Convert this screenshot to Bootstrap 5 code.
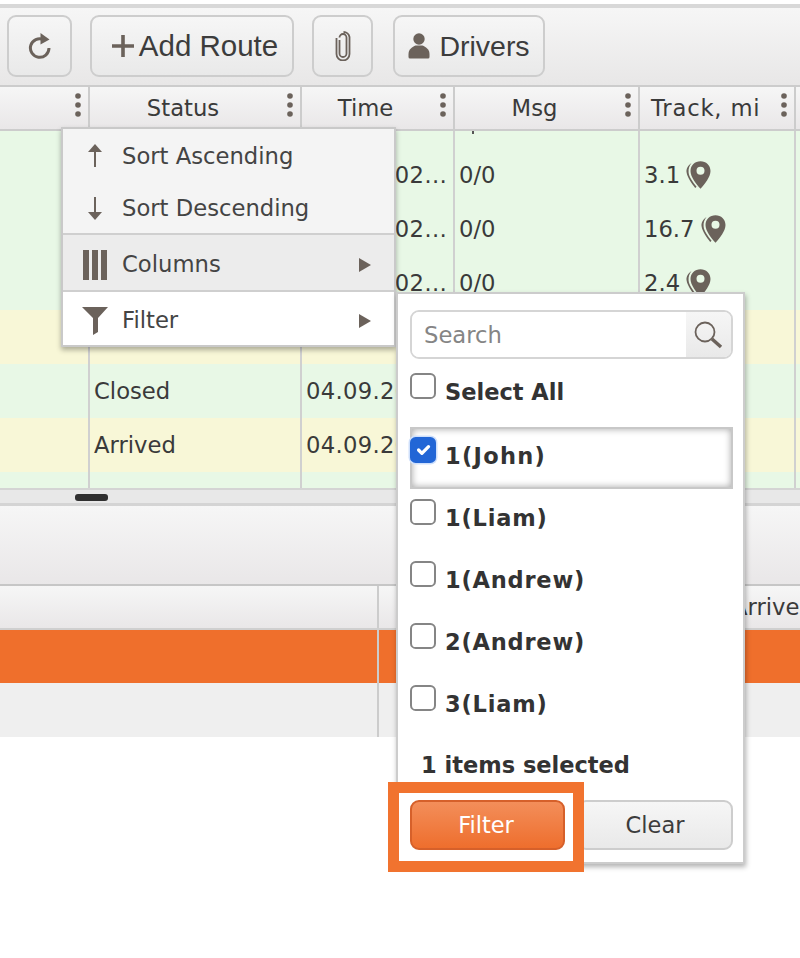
<!DOCTYPE html>
<html lang="en">
<head>
<meta charset="utf-8">
<title>Routes</title>
<link href="https://cdn.jsdelivr.net/npm/bootstrap@5.3.0/dist/css/bootstrap.min.css" rel="stylesheet">
<style>
body{margin:0;background:#fff;font-family:"DejaVu Sans",sans-serif;font-size:22.7px;color:#3a3a3a;overflow:hidden}
.rk-app{position:relative;width:800px;height:958px;overflow:hidden;padding-top:4px}
.rk-topline{height:4px;background:#d8d8d8}
.rk-toolbar{height:77px;padding:7px 0 0 7px;background:linear-gradient(#f6f6f6,#e8e7e7);gap:18px}
.rk-tb{height:62px;border:2px solid #cdcdcd;border-radius:9px;background:linear-gradient(#f6f6f6,#e9e9e9);font-family:"Liberation Sans",sans-serif;font-size:29.5px;color:#3c3c3c;padding:0;display:flex;align-items:center;justify-content:center;gap:5px}
.rk-tb:hover{border-color:#cdcdcd}
.rk-w65{width:65px}.rk-w205{width:204px;padding-left:6px}.rk-w62{width:61px;margin-right:2px}.rk-w153{width:152px}
.rk-drivers{font-size:28.5px;gap:9px;padding-right:0}
.rk-head{height:46px;border-top:2px solid #ccc;border-bottom:2px solid #ccc;background:linear-gradient(#f6f6f6,#e9e7e8)}
.rk-hc{position:relative;height:100%;border-right:2px solid #ccc;text-align:center;line-height:42px;flex:none;white-space:nowrap;overflow:hidden;padding-right:24px}
.rk-hc svg{position:absolute;right:6px;top:5px}
.rk-c0{width:90px}.rk-c1{width:212px}.rk-c2{width:153px}.rk-c3{width:185px}.rk-c4{width:156px}.rk-c5{flex:1;border-right:0}
.rk-head .rk-track{text-align:left;padding-left:11px;padding-right:0;letter-spacing:.8px}
.rk-grid{height:357px;overflow:hidden}
.rk-part{height:16.5px}
.rk-tick{width:2px;height:3px;background:#555;margin-left:13px}
.rk-row{height:54px}
.rk-green{background:#e8f8e6}.rk-yellow{background:#f8f7d7}
.rk-cell{height:100%;border-right:2px solid #d0d0d0;flex:none;padding:0 4px;line-height:54px;white-space:nowrap;overflow:hidden;text-overflow:ellipsis}
.rk-time{letter-spacing:.3px;padding-right:6px}
.rk-upper{line-height:55px}
.rk-pin{margin-left:6px;vertical-align:-6px}
.rk-scroll{height:15px;border-top:2px solid #d4d4d4;background:#e8e8e8;padding:4px 0 0 75px}
.rk-thumb{width:33px;height:7px;background:#303030;border-radius:3px}
.rk-strip{height:3px;background:#d4d4d4}
.rk-lowbar{height:78px;background:linear-gradient(#f6f6f6,#e9e7e8)}
.rk-lowhead{height:46px;border-top:2px solid #c6c6c6;border-bottom:2px solid #cfcfcf;background:linear-gradient(#f6f6f6,#e9e7e8)}
.rk-lc{height:100%;flex:none;border-right:2px solid #ccc}
.rk-l0{width:379px}.rk-l1{width:347px}.rk-l2{flex:1;border-right:0;padding-left:6px;line-height:42px;white-space:nowrap;overflow:hidden}
.rk-orange{height:53px;background:#ef6f2c}
.rk-gray{height:54px;background:#efefef}
.rk-menu{position:absolute;left:61px;top:127px;width:335px;height:220px;border:2px solid #c9c9c9;box-shadow:0 3px 5px rgba(0,0,0,.3);background:#f4f4f4;z-index:5;border-radius:0}
.rk-mi{display:flex;align-items:center;border:0;border-radius:0;background:transparent;padding:1px 0 0;color:#444;height:52px}
.rk-mi-ico{width:59px;display:flex;justify-content:center;padding-left:5px;flex:none;box-sizing:border-box}
.rk-mi-txt{flex:1}
.rk-tri{margin-right:22px}
.rk-menu .rk-mi-col{height:59px;background:#ececec;border-top:2px solid #cfcfcf;border-bottom:2px solid #cfcfcf;padding-top:4px}
.rk-menu .rk-mi-fil{height:53px;background:#fff;padding-top:4px}
.rk-mi-first{height:53px}
.rk-mi-sec{height:51px}
.rk-sub{position:absolute;left:396px;top:292px;width:349px;height:572px;background:#fff;border:2px solid #ccc;box-shadow:1px 3px 5px rgba(0,0,0,.3);padding:16px 10px 0 12px;z-index:6}
.rk-search{height:49px;border:2px solid #d5d5d5;border-radius:9px;overflow:hidden;flex-wrap:nowrap}
.rk-sinput{border:0;border-radius:0;font-size:22.7px;font-family:"DejaVu Sans",sans-serif;padding:0 0 0 12px;height:45px;box-shadow:none}
.rk-sinput::placeholder{color:#858585}
.rk-sbtn{width:46px;flex:none;background:linear-gradient(#f6f6f6,#e9e9e9);display:flex;align-items:center;justify-content:center}
.rk-item{display:flex;gap:9px;height:62px;padding-top:10px;font-weight:700;color:#333;align-items:flex-start;font-size:22.5px}
.rk-name{letter-spacing:.8px}
.rk-john{letter-spacing:1.3px}
.rk-item-first{height:64px}
.rk-item-sel{border:2px solid #c8c8c8;box-shadow:inset 0 0 7px rgba(0,0,0,.35);padding-top:8px}
.rk-item-sel .rk-check{margin-left:-2px}
.rk-check{width:26px;height:26px;margin:0;flex:none;border:2px solid #858585;border-radius:5px}
.rk-check:checked{background-color:#2266d6;border-color:#2266d6;box-shadow:0 0 0 1.5px #cfe0fb}
.rk-itxt{line-height:26px;margin-top:6px}
.rk-count{font-weight:700;color:#333;line-height:26px;margin:15px 0 22px 11px;font-size:22.5px}
.rk-btns{gap:12px}
.rk-fbtn,.rk-cbtn{height:50px;border-radius:9px;font-size:22.5px;font-family:"DejaVu Sans",sans-serif;padding:0;line-height:1}
.rk-fbtn{width:155px;flex:none;color:#fff;border:2px solid #d6602a;background:linear-gradient(#f38e5a,#ee6e2d);padding-right:3px}
.rk-cbtn{flex:1;color:#3c3c3c;border:2px solid #cdcdcd;background:linear-gradient(#f6f6f6,#e9e9e9)}
.rk-hilite{position:absolute;left:388px;top:782px;width:196px;height:90px;border:11px solid #f1732f;z-index:7;pointer-events:none}
</style>
</head>
<body>
<svg width="0" height="0" class="position-absolute">
  <defs>
    <symbol id="rk-dots" viewBox="0 0 8 32"><circle cx="4" cy="4" r="2.8" fill="#6b625b"/><circle cx="4" cy="13" r="2.8" fill="#6b625b"/><circle cx="4" cy="22" r="2.8" fill="#6b625b"/></symbol>
    <symbol id="rk-pinicon" viewBox="0 0 25 28">
      <path d="M5.500 2C2 4.500 0 7.500.6 11.500c.8 5 4.800 10.500 8.600 15.500l1.400-1.300C6.800 21 3 16 2.600 11.500 2.200 7.800 3.500 4.500 5.500 2z" fill="#6b625b"/>
      <path fill-rule="evenodd" d="M14.500.3c5.600 0 10 4.200 10 9.600 0 6-5.900 13.300-10 17.800C10.400 23.200 4.500 15.900 4.500 9.900 4.500 4.500 8.900.3 14.500.3zm0 5.400a4 4 0 1 0 0 8 4 4 0 0 0 0-8z" fill="#6b625b"/>
    </symbol>
    <symbol id="rk-tricon" viewBox="0 0 14 16"><path d="M1 1l12 7-12 7z" fill="#6b625b"/></symbol>
  </defs>
</svg>

<div class="rk-app">
  <div class="rk-topline"></div>
  <div class="rk-toolbar d-flex align-items-start">
    <button type="button" class="btn rk-tb rk-w65" aria-label="Reload">
      <svg width="24" height="26" viewBox="0 0 24 26"><path d="M15.500 6.500A9.300 9.300 0 1 0 21 15" fill="none" stroke="#6b625b" stroke-width="3"/><path d="M12.500 0l9 6.500-9 5z" fill="#6b625b"/></svg>
    </button>
    <button type="button" class="btn rk-tb rk-w205">
      <svg width="22" height="22" viewBox="0 0 22 22"><path d="M0 9.200h22v3.600H0zM9.200 0h3.600v22H9.200z" fill="#6b625b"/></svg><span>Add Route</span>
    </button>
    <button type="button" class="btn rk-tb rk-w62" aria-label="Attach">
      <svg width="16" height="30" viewBox="0 0 16 30"><path d="M4.500 9v13.500a3.500 3.500 0 0 0 7 0V6.500a3 3 0 0 0-7 0M1.500 7v16a6.500 6.500 0 0 0 13 0V6a6 6 0 0 0-6-5" fill="none" stroke="#6b625b" stroke-width="1.800"/></svg>
    </button>
    <button type="button" class="btn rk-tb rk-drivers rk-w153">
      <svg width="22" height="26" viewBox="0 0 22 26"><circle cx="11" cy="6" r="5.700" fill="#6b625b"/><path d="M7.500 12.500h7c3 1.500 7 3.500 7 8.500v3a1.500 1.500 0 0 1-1.500 1.500H2A1.500 1.500 0 0 1 .5 24v-3c0-5 4-7 7-8.500z" fill="#6b625b"/></svg><span>Drivers</span>
    </button>
  </div>

  <div class="rk-head d-flex">
    <div class="rk-hc rk-c0"><svg width="8" height="32"><use href="#rk-dots"/></svg></div>
    <div class="rk-hc rk-c1">Status<svg width="8" height="32"><use href="#rk-dots"/></svg></div>
    <div class="rk-hc rk-c2">Time<svg width="8" height="32"><use href="#rk-dots"/></svg></div>
    <div class="rk-hc rk-c3">Msg<svg width="8" height="32"><use href="#rk-dots"/></svg></div>
    <div class="rk-hc rk-c4 rk-track">Track, mi<svg width="8" height="32"><use href="#rk-dots"/></svg></div>
    <div class="rk-hc rk-c5"></div>
  </div>

  <div class="rk-grid">
    <div class="rk-part rk-green d-flex"><div class="rk-cell rk-c0"></div><div class="rk-cell rk-c1"></div><div class="rk-cell rk-c2"></div><div class="rk-cell rk-c3"><div class="rk-tick"></div></div><div class="rk-cell rk-c4"></div><div class="rk-cell rk-c5"></div></div>
    <div class="rk-row rk-green d-flex"><div class="rk-cell rk-c0"></div><div class="rk-cell rk-c1"></div><div class="rk-cell rk-c2 rk-time rk-upper">04.09.2021 10:02</div><div class="rk-cell rk-c3 rk-upper">0/0</div><div class="rk-cell rk-c4 rk-upper">3.1<svg class="rk-pin" width="25" height="28"><use href="#rk-pinicon"/></svg></div><div class="rk-cell rk-c5"></div></div>
    <div class="rk-row rk-green d-flex"><div class="rk-cell rk-c0"></div><div class="rk-cell rk-c1"></div><div class="rk-cell rk-c2 rk-time rk-upper">04.09.2021 10:15</div><div class="rk-cell rk-c3 rk-upper">0/0</div><div class="rk-cell rk-c4 rk-upper">16.7<svg class="rk-pin" width="25" height="28"><use href="#rk-pinicon"/></svg></div><div class="rk-cell rk-c5"></div></div>
    <div class="rk-row rk-green d-flex"><div class="rk-cell rk-c0"></div><div class="rk-cell rk-c1"></div><div class="rk-cell rk-c2 rk-time rk-upper">04.09.2021 10:30</div><div class="rk-cell rk-c3 rk-upper">0/0</div><div class="rk-cell rk-c4 rk-upper">2.4<svg class="rk-pin" width="25" height="28"><use href="#rk-pinicon"/></svg></div><div class="rk-cell rk-c5"></div></div>
    <div class="rk-row rk-yellow d-flex"><div class="rk-cell rk-c0"></div><div class="rk-cell rk-c1"></div><div class="rk-cell rk-c2"></div><div class="rk-cell rk-c3"></div><div class="rk-cell rk-c4"></div><div class="rk-cell rk-c5"></div></div>
    <div class="rk-row rk-green d-flex"><div class="rk-cell rk-c0"></div><div class="rk-cell rk-c1">Closed</div><div class="rk-cell rk-c2 rk-time">04.09.2021 10:48</div><div class="rk-cell rk-c3"></div><div class="rk-cell rk-c4"></div><div class="rk-cell rk-c5"></div></div>
    <div class="rk-row rk-yellow d-flex"><div class="rk-cell rk-c0"></div><div class="rk-cell rk-c1">Arrived</div><div class="rk-cell rk-c2 rk-time">04.09.2021 11:05</div><div class="rk-cell rk-c3"></div><div class="rk-cell rk-c4"></div><div class="rk-cell rk-c5"></div></div>
    <div class="rk-row rk-green d-flex"><div class="rk-cell rk-c0"></div><div class="rk-cell rk-c1"></div><div class="rk-cell rk-c2"></div><div class="rk-cell rk-c3"></div><div class="rk-cell rk-c4"></div><div class="rk-cell rk-c5"></div></div>
  </div>

  <div class="rk-scroll"><div class="rk-thumb"></div></div>
  <div class="rk-strip"></div>
  <div class="rk-lowbar"></div>
  <div class="rk-lowhead d-flex"><div class="rk-lc rk-l0"></div><div class="rk-lc rk-l1"></div><div class="rk-lc rk-l2">Arrived</div></div>
  <div class="rk-orange d-flex"><div class="rk-lc rk-l0"></div><div class="rk-lc rk-l1"></div></div>
  <div class="rk-gray d-flex"><div class="rk-lc rk-l0"></div><div class="rk-lc rk-l1"></div></div>

  <div class="rk-menu list-group">
    <div class="list-group-item rk-mi rk-mi-first"><span class="rk-mi-ico"><svg width="16" height="24" viewBox="0 0 16 24"><path d="M8 0l7 8H9v15H7V8H1z" fill="#6b625b"/></svg></span><span class="rk-mi-txt">Sort Ascending</span></div>
    <div class="list-group-item rk-mi rk-mi-sec"><span class="rk-mi-ico"><svg width="16" height="24" viewBox="0 0 16 24"><path d="M8 24l7-8H9V1H7v15H1z" fill="#6b625b"/></svg></span><span class="rk-mi-txt">Sort Descending</span></div>
    <div class="list-group-item rk-mi rk-mi-col"><span class="rk-mi-ico"><svg width="24" height="30" viewBox="0 0 24 30"><path d="M0 0h6v30H0zM9 0h6v30H9zM18 0h6v30h-6z" fill="#6b625b"/></svg></span><span class="rk-mi-txt">Columns</span><svg class="rk-tri" width="14" height="16"><use href="#rk-tricon"/></svg></div>
    <div class="list-group-item rk-mi rk-mi-fil"><span class="rk-mi-ico"><svg width="26" height="28" viewBox="0 0 26 28"><path d="M0 0h26L16 11v14l-5 3V11z" fill="#6b625b"/></svg></span><span class="rk-mi-txt">Filter</span><svg class="rk-tri" width="14" height="16"><use href="#rk-tricon"/></svg></div>
  </div>

  <div class="rk-sub">
    <div class="input-group rk-search">
      <input type="text" class="form-control rk-sinput" placeholder="Search">
      <span class="rk-sbtn"><svg width="30" height="30" viewBox="0 0 30 30"><circle cx="12" cy="12" r="9.500" fill="none" stroke="#6b625b" stroke-width="1.800"/><path d="M19 19l9 8" stroke="#6b625b" stroke-width="3.500" fill="none"/></svg></span>
    </div>
    <div class="mt-1">
      <label class="rk-item rk-item-first"><input class="form-check-input rk-check" type="checkbox"><span class="rk-itxt">Select All</span></label>
      <label class="rk-item rk-item-sel"><input class="form-check-input rk-check" type="checkbox" checked><span class="rk-itxt rk-john">1(John)</span></label>
      <label class="rk-item"><input class="form-check-input rk-check" type="checkbox"><span class="rk-itxt rk-name">1(Liam)</span></label>
      <label class="rk-item"><input class="form-check-input rk-check" type="checkbox"><span class="rk-itxt rk-name">1(Andrew)</span></label>
      <label class="rk-item"><input class="form-check-input rk-check" type="checkbox"><span class="rk-itxt rk-name">2(Andrew)</span></label>
      <label class="rk-item"><input class="form-check-input rk-check" type="checkbox"><span class="rk-itxt rk-name">3(Liam)</span></label>
    </div>
    <div class="rk-count">1 items selected</div>
    <div class="d-flex rk-btns">
      <button type="button" class="btn rk-fbtn">Filter</button>
      <button type="button" class="btn rk-cbtn">Clear</button>
    </div>
  </div>
  <div class="rk-hilite"></div>
</div>
<script src="https://cdn.jsdelivr.net/npm/bootstrap@5.3.0/dist/js/bootstrap.bundle.min.js"></script>
</body>
</html>
